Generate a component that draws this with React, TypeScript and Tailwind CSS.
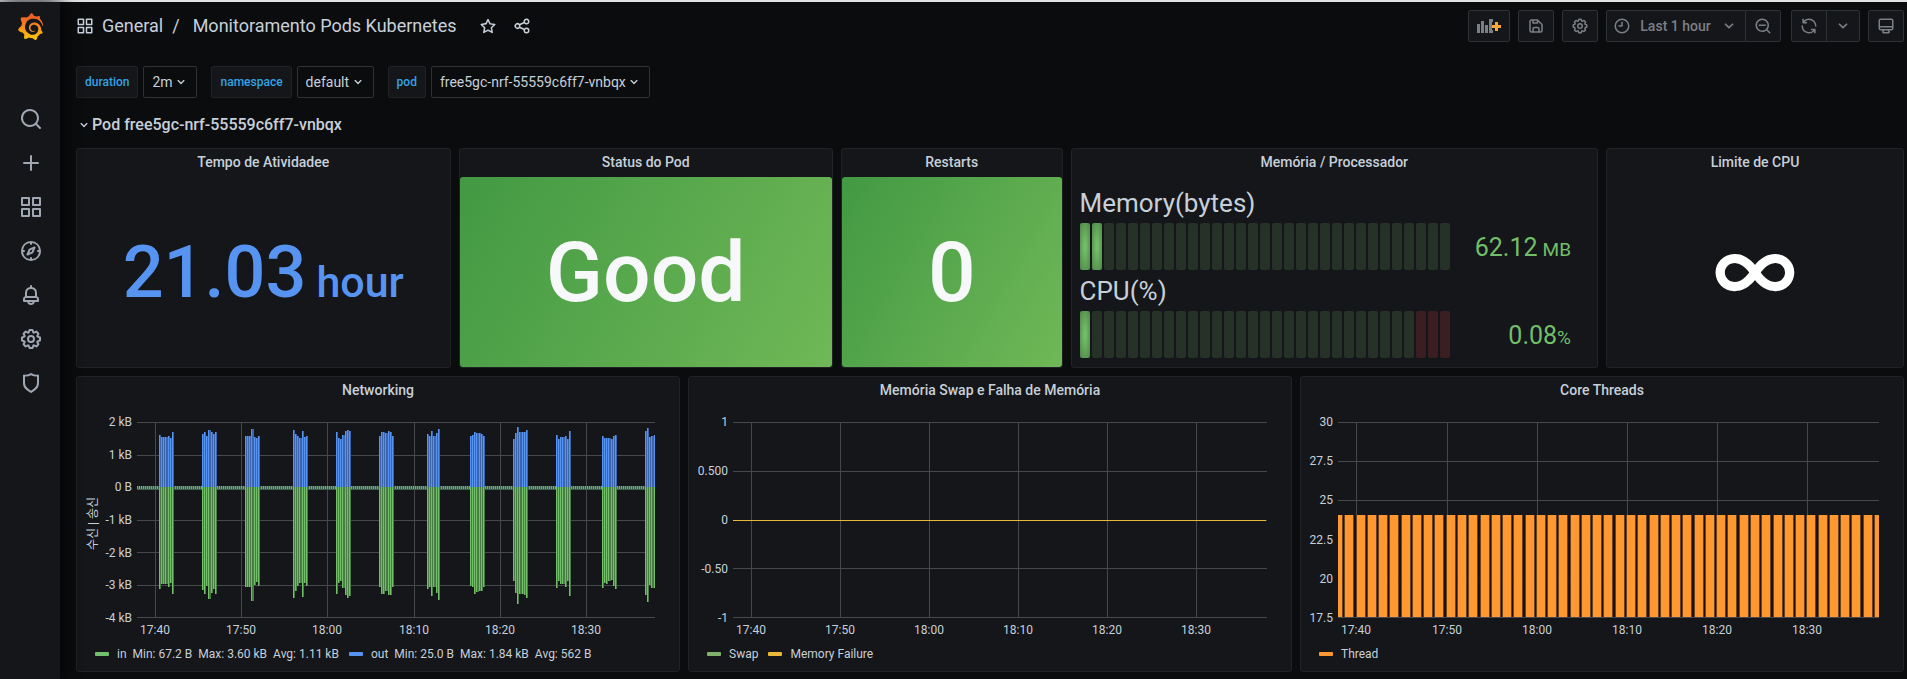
import type { ReactNode } from "react";
import { SiGrafana } from "react-icons/si";

const ICONS = {
  search:
    "M21.71,20.29,18,16.61A9,9,0,1,0,16.61,18l3.68,3.68a1,1,0,0,0,1.42,0A1,1,0,0,0,21.71,20.29ZM11,18a7,7,0,1,1,7-7A7,7,0,0,1,11,18Z",
  plus: "M19,11H13V5a1,1,0,0,0-2,0v6H5a1,1,0,0,0,0,2h6v6a1,1,0,0,0,2,0V13h6a1,1,0,0,0,0-2Z",
  apps: "M10,13H3a1,1,0,0,0-1,1v7a1,1,0,0,0,1,1h7a1,1,0,0,0,1-1V14A1,1,0,0,0,10,13ZM9,20H4V15H9ZM21,2H14a1,1,0,0,0-1,1v7a1,1,0,0,0,1,1h7a1,1,0,0,0,1-1V3A1,1,0,0,0,21,2ZM20,9H15V4h5Zm1,4H14a1,1,0,0,0-1,1v7a1,1,0,0,0,1,1h7a1,1,0,0,0,1-1V14A1,1,0,0,0,21,13Zm-1,7H15V15h5ZM10,2H3A1,1,0,0,0,2,3v7a1,1,0,0,0,1,1h7a1,1,0,0,0,1-1V3A1,1,0,0,0,10,2ZM9,9H4V4H9Z",
  compass:
    "M12,2A10,10,0,1,0,22,12,10,10,0,0,0,12,2Zm1,17.93V19a1,1,0,0,0-2,0v.93A8,8,0,0,1,4.07,13H5a1,1,0,0,0,0-2H4.07A8,8,0,0,1,11,4.07V5a1,1,0,0,0,2,0V4.07A8,8,0,0,1,19.93,11H19a1,1,0,0,0,0,2h.93A8,8,0,0,1,13,19.93ZM15.14,7.55l-5,2.12a1,1,0,0,0-.52.52l-2.12,5a1,1,0,0,0,.21,1.1,1,1,0,0,0,.7.29.93.93,0,0,0,.4-.09l5-2.12a1,1,0,0,0,.52-.52l2.12-5a1,1,0,0,0-1.31-1.31Zm-2.49,5.1-2.28,1,1-2.28,2.28-1Z",
  bell: "M18,13.18V10a6,6,0,0,0-5-5.91V3a1,1,0,0,0-2,0V4.09A6,6,0,0,0,6,10v3.18A3,3,0,0,0,4,16v2a1,1,0,0,0,1,1H8.14a4,4,0,0,0,7.72,0H19a1,1,0,0,0,1-1V16A3,3,0,0,0,18,13.18ZM8,10a4,4,0,0,1,8,0v3H8Zm4,10a2,2,0,0,1-1.72-1h3.44A2,2,0,0,1,12,20Zm6-3H6V16a1,1,0,0,1,1-1H17a1,1,0,0,1,1,1Z",
  cog: "M21.32,9.55l-1.89-.63.89-1.78A1,1,0,0,0,20.13,6L18,3.87a1,1,0,0,0-1.15-.19l-1.78.89-.63-1.89A1,1,0,0,0,13.5,2h-3a1,1,0,0,0-.95.68L8.92,4.57,7.14,3.68A1,1,0,0,0,6,3.87L3.87,6a1,1,0,0,0-.19,1.15l.89,1.78-1.89.63A1,1,0,0,0,2,10.5v3a1,1,0,0,0,.68.95l1.89.63-.89,1.78A1,1,0,0,0,3.87,18L6,20.13a1,1,0,0,0,1.15.19l1.78-.89.63,1.89a1,1,0,0,0,.95.68h3a1,1,0,0,0,.95-.68l.63-1.89,1.78.89A1,1,0,0,0,18,20.13L20.13,18a1,1,0,0,0,.19-1.15l-.89-1.78,1.89-.63A1,1,0,0,0,22,13.5v-3A1,1,0,0,0,21.32,9.55ZM20,12.78l-1.2.4A2,2,0,0,0,17.64,16l.57,1.14-1.1,1.1L16,17.64a2,2,0,0,0-2.79,1.16l-.4,1.2H11.22l-.4-1.2A2,2,0,0,0,8,17.64l-1.14.57-1.1-1.1L6.36,16A2,2,0,0,0,5.2,13.18L4,12.78V11.22l1.2-.4A2,2,0,0,0,6.36,8L5.79,6.89l1.1-1.1L8,6.36A2,2,0,0,0,10.82,5.2l.4-1.2h1.56l.4,1.2A2,2,0,0,0,16,6.36l1.14-.57,1.1,1.1L17.64,8a2,2,0,0,0,1.16,2.79l1.2.4ZM12,8a4,4,0,1,0,4,4A4,4,0,0,0,12,8Zm0,6a2,2,0,1,1,2-2A2,2,0,0,1,12,14Z",
  shield:
    "M19.63,3.65a1,1,0,0,0-.84-.2,8,8,0,0,1-6.22-1.27,1,1,0,0,0-1.14,0A8,8,0,0,1,5.21,3.45a1,1,0,0,0-.84.2A1,1,0,0,0,4,4.43v7.45a9,9,0,0,0,3.77,7.33l3.65,2.6a1,1,0,0,0,1.16,0l3.65-2.6A9,9,0,0,0,20,11.88V4.43A1,1,0,0,0,19.63,3.65ZM18,11.88a7,7,0,0,1-2.93,5.7L12,19.77,8.93,17.58A7,7,0,0,1,6,11.88V5.58a10,10,0,0,0,6-1.39,10,10,0,0,0,6,1.39Z",
  star: "M22,9.67A1,1,0,0,0,21.14,9l-5.69-.83L12.9,3a1,1,0,0,0-1.8,0L8.55,8.16,2.86,9a1,1,0,0,0-.81.68,1,1,0,0,0,.25,1l4.13,4-1,5.68A1,1,0,0,0,6.9,21.44L12,18.77l5.1,2.67a.93.93,0,0,0,.46.12,1,1,0,0,0,.59-.19,1,1,0,0,0,.4-1l-1-5.68,4.13-4A1,1,0,0,0,22,9.67Zm-6.15,4a1,1,0,0,0-.29.88l.72,4.2-3.76-2a1.06,1.06,0,0,0-.94,0l-3.76,2,.72-4.2a1,1,0,0,0-.29-.88l-3-3,4.21-.61a1,1,0,0,0,.76-.55L12,5.7l1.88,3.82a1,1,0,0,0,.76.55l4.21.61Z",
  share:
    "M18,14a4,4,0,0,0-3.08,1.48l-5.1-2.35a3.64,3.64,0,0,0,0-2.26l5.1-2.35A4,4,0,1,0,14,6a4.17,4.17,0,0,0,.07.71L8.79,9.14a4,4,0,1,0,0,5.72l5.28,2.43A4.17,4.17,0,0,0,14,18a4,4,0,1,0,4-4ZM18,4a2,2,0,1,1-2,2A2,2,0,0,1,18,4ZM6,14a2,2,0,1,1,2-2A2,2,0,0,1,6,14Zm12,6a2,2,0,1,1,2-2A2,2,0,0,1,18,20Z",
  save: "M20.71,9.29l-6-6a1,1,0,0,0-.32-.21A1.09,1.09,0,0,0,14,3H6A3,3,0,0,0,3,6V18a3,3,0,0,0,3,3H18a3,3,0,0,0,3-3V10A1,1,0,0,0,20.71,9.29ZM9,5h4V7H9Zm6,14H9V16a1,1,0,0,1,1-1h4a1,1,0,0,1,1,1Zm4-1a1,1,0,0,1-1,1H17V16a3,3,0,0,0-3-3H10a3,3,0,0,0-3,3v3H6a1,1,0,0,1-1-1V6A1,1,0,0,1,6,5H7V8A1,1,0,0,0,8,9h6a1,1,0,0,0,1-1V6.41l4,4Z",
  clock:
    "M12,2A10,10,0,1,0,22,12,10,10,0,0,0,12,2Zm0,18a8,8,0,1,1,8-8A8,8,0,0,1,12,20ZM12,6a1,1,0,0,0-1,1v4H8a1,1,0,0,0,0,2h4a1,1,0,0,0,1-1V7A1,1,0,0,0,12,6Z",
  down: "M17,9.17a1,1,0,0,0-1.41,0L12,12.71,8.46,9.17a1,1,0,0,0-1.41,0,1,1,0,0,0,0,1.42l4.24,4.24a1,1,0,0,0,1.42,0L17,10.59A1,1,0,0,0,17,9.17Z",
  zoomOut:
    "M21.71,20.29,18,16.61A9,9,0,1,0,16.61,18l3.68,3.68a1,1,0,0,0,1.42,0A1,1,0,0,0,21.71,20.29ZM11,18a7,7,0,1,1,7-7A7,7,0,0,1,11,18Zm4-8H7a1,1,0,0,0,0,2h8a1,1,0,0,0,0-2Z",
  sync: "M19.91,15.51H15.38a1,1,0,0,0,0,2h2.4A8,8,0,0,1,4,12a1,1,0,1,0-2,0,10,10,0,0,0,16.88,7.23V21a1,1,0,0,0,2,0V16.5A1,1,0,0,0,19.91,15.51ZM12,2A10,10,0,0,0,5.12,4.77V3a1,1,0,0,0-2,0V7.5a1,1,0,0,0,1,1h4.5a1,1,0,0,0,0-2H6.22A8,8,0,0,1,20,12a1,1,0,0,0,2,0A10,10,0,0,0,12,2Z",
  monitor:
    "M19,2H5A3,3,0,0,0,2,5V15a3,3,0,0,0,3,3H7.64l-.58,1a2,2,0,0,0,0,2,2,2,0,0,0,1.75,1h6.46A2,2,0,0,0,17,21a2,2,0,0,0,0-2l-.59-1H19a3,3,0,0,0,3-3V5A3,3,0,0,0,19,2ZM8.77,20,10,18H14l1.2,2ZM20,15a1,1,0,0,1-1,1H5a1,1,0,0,1-1-1V14H20Zm0-3H4V5A1,1,0,0,1,5,4H19a1,1,0,0,1,1,1Z",
};

type IconName = keyof typeof ICONS;

function Icon({ name, className = "size-[18px]" }: { name: IconName; className?: string }) {
  return (
    <svg viewBox="0 0 24 24" fill="currentColor" aria-hidden="true" className={`${className} shrink-0`}>
      <path d={ICONS[name]} />
    </svg>
  );
}

function AddPanelIcon() {
  return (
    <svg viewBox="0 0 24 16" aria-hidden="true" className="h-4 w-6 shrink-0">
      <g fill="#7b8087">
        <rect x="0" y="6" width="3" height="9" />
        <rect x="4" y="3" width="3" height="12" />
        <rect x="8" y="7" width="3" height="8" />
        <path d="M12 1h4v3h-1v8h1v3h-4z" />
      </g>
      <path d="M18 4h3v3h3v3h-3v3h-3v-3h-3V7h3z" fill="#fba43b" />
    </svg>
  );
}

const NAV: { icon: IconName; label: string }[] = [
  { icon: "search", label: "Search" },
  { icon: "plus", label: "Create" },
  { icon: "apps", label: "Dashboards" },
  { icon: "compass", label: "Explore" },
  { icon: "bell", label: "Alerting" },
  { icon: "cog", label: "Configuration" },
  { icon: "shield", label: "Server Admin" },
];

function Sidebar() {
  return (
    <nav className="z-10 flex w-[60px] shrink-0 flex-col items-center bg-[#141619] pl-px shadow-[0_0_20px_#000]">
      <svg className="h-0 w-0" aria-hidden="true">
        <linearGradient id="logo-fill" x1="0" y1="0" x2="0" y2="1">
          <stop offset="0.1" stopColor="#f05a28" />
          <stop offset="1" stopColor="#fbca0a" />
        </linearGradient>
      </svg>
      <a href="#home" aria-label="Home" className="mt-[11px] mb-[67px]">
        <SiGrafana size={27} fill="url(#logo-fill)" />
      </a>
      <div className="flex flex-col gap-5">
        {NAV.map((item) => (
          <a key={item.icon} href={`#${item.icon}`} aria-label={item.label} className="text-[#9fa7b3]">
            <Icon name={item.icon} className="size-6" />
          </a>
        ))}
      </div>
    </nav>
  );
}

function ToolButton({ label, className, children }: { label?: string; className: string; children: ReactNode }) {
  return (
    <button
      type="button"
      aria-label={label}
      className={`${className} flex h-8 items-center justify-center border border-[#2c3235] bg-[#141619] text-sm font-medium text-[#7b8087]`}
    >
      {children}
    </button>
  );
}

function TopBar() {
  return (
    <header className="flex items-center justify-between pr-[3px] pl-4">
      <div className="flex items-center text-[#c7d0d9]">
        <Icon name="apps" />
        <h1 className="ml-2 flex text-lg leading-6">
          <a href="#general">General</a>
          <span className="mr-[13px] ml-[9px]">/</span>
          <a href="#dashboard">Monitoramento Pods Kubernetes</a>
        </h1>
        <button type="button" aria-label="Mark as favorite" className="ml-[22px]">
          <Icon name="star" />
        </button>
        <button type="button" aria-label="Share dashboard" className="ml-4">
          <Icon name="share" />
        </button>
      </div>
      <div className="flex gap-2">
        <ToolButton label="Add panel" className="w-[42px] rounded-xs">
          <AddPanelIcon />
        </ToolButton>
        <ToolButton label="Save dashboard" className="w-9 rounded-xs">
          <Icon name="save" />
        </ToolButton>
        <ToolButton label="Dashboard settings" className="w-9 rounded-xs">
          <Icon name="cog" />
        </ToolButton>
        <div className="mr-0.5 flex">
          <ToolButton className="w-[140px] rounded-l-xs">
            <Icon name="clock" />
            <span className="mr-2 ml-[9px]">Last 1 hour</span>
            <Icon name="down" className="size-5" />
          </ToolButton>
          <ToolButton label="Zoom out time range" className="-ml-px w-9 rounded-r-xs">
            <Icon name="zoomOut" />
          </ToolButton>
        </div>
        <div className="flex">
          <ToolButton label="Refresh dashboard" className="w-9 rounded-l-xs">
            <Icon name="sync" />
          </ToolButton>
          <ToolButton label="Refresh interval" className="-ml-px w-[34px] rounded-r-xs">
            <Icon name="down" className="size-5" />
          </ToolButton>
        </div>
        <ToolButton label="Cycle view mode" className="w-9 rounded-xs">
          <Icon name="monitor" />
        </ToolButton>
      </div>
    </header>
  );
}

const VARIABLES = [
  { name: "duration", value: "2m" },
  { name: "namespace", value: "default" },
  { name: "pod", value: "free5gc-nrf-55559c6ff7-vnbqx" },
];

function Variables() {
  return (
    <div className="flex gap-[14px]">
      {VARIABLES.map((v) => (
        <div key={v.name} className="flex gap-[5px]">
          <label
            htmlFor={`var-${v.name}`}
            className="flex h-8 items-center rounded-xs border border-[#202226] bg-[#141619] px-2 text-xs font-medium text-[#33a2e5]"
          >
            {v.name}
          </label>
          <div className="relative flex">
            <select
              id={`var-${v.name}`}
              className="h-8 appearance-none rounded-xs border border-[#2c3235] bg-[#0b0c0e] pr-[23px] pl-2 text-sm text-[#c7d0d9]"
            >
              <option>{v.value}</option>
            </select>
            <span className="pointer-events-none absolute inset-y-0 right-2 flex items-center text-[#c7d0d9]">
              <Icon name="down" className="size-4" />
            </span>
          </div>
        </div>
      ))}
    </div>
  );
}

function Panel({ title, className, children }: { title: string; className: string; children: ReactNode }) {
  return (
    <section className={`${className} flex min-w-0 flex-col rounded-[3px] border border-[#202226] bg-[#141619]`}>
      <h2 className="h-7 text-center text-sm leading-[26px] font-medium text-[#c7d0d9]">{title}</h2>
      {children}
    </section>
  );
}

const COLORED = "bg-[linear-gradient(120deg,#429943,#70b857)] pt-0.5 text-[#f7f8fa] text-[84px]";

function Stat({ className, children }: { className: string; children: ReactNode }) {
  return (
    <div className={`${className} flex flex-1 items-center justify-center rounded-[3px] font-medium`}>
      <div className="flex items-baseline leading-none">{children}</div>
    </div>
  );
}

const CELLS = 31;

function Gauge(props: { title: string; value: string; unit: ReactNode; lit: number; critical: number }) {
  return (
    <div>
      <h3 className="h-[38px] text-[26px] leading-9 text-[#c7d0d9]">{props.title}</h3>
      <div className="flex h-[47px] items-center">
        <div className="flex h-full w-[370px] gap-0.5">
          {Array.from({ length: CELLS }, (_, i) => {
            const fill =
              i < props.lit
                ? "bg-[radial-gradient(#73bf69_10%,#4f8549)]"
                : i >= CELLS - props.critical
                  ? "bg-[#3b1e22]"
                  : "bg-[#263127]";
            return <span key={i} className={`${fill} flex-1 rounded-xs`} />;
          })}
        </div>
        <div className="flex flex-1 items-baseline justify-end pt-0.5 pr-[18px] text-[25px] text-[#73bf69]">
          {props.value}
          {props.unit}
        </div>
      </div>
    </div>
  );
}

interface ChartProps {
  width: number;
  yLabels: string[];
  axisWidth: string;
  axisTitle?: string;
  xTicks: number[];
  overlay: ReactNode;
  legend: ReactNode;
}

const TIMES = ["17:40", "17:50", "18:00", "18:10", "18:20", "18:30"];
const PLOT_HEIGHT = 196;

function Chart({ width, yLabels, axisWidth, axisTitle, xTicks, overlay, legend }: ChartProps) {
  const step = (PLOT_HEIGHT - 1) / (yLabels.length - 1);
  return (
    <div className="flex flex-1 flex-col pt-[17px] pb-[9px] text-xs leading-4 text-[#c7d0d9]">
      <div className="flex h-[196px] pr-6">
        <div className={`${axisWidth} flex shrink-0 justify-end`}>
          {axisTitle && (
            <span className="mr-auto ml-2 rotate-180 self-center pb-2 whitespace-nowrap [text-orientation:sideways] [writing-mode:vertical-rl]">
              {axisTitle}
            </span>
          )}
          <div className="flex flex-col justify-between pr-[5px] text-right">
            {yLabels.map((label) => (
              <span key={label} className="flex h-0 items-center justify-end whitespace-nowrap">
                {label}
              </span>
            ))}
          </div>
        </div>
        <div className="relative min-w-0 flex-1">
          <svg
            viewBox={`0 0 ${width} ${PLOT_HEIGHT}`}
            preserveAspectRatio="none"
            shapeRendering="crispEdges"
            className="h-full w-full"
          >
            <g fill="#46484b">
              {yLabels.map((label, i) => (
                <rect key={label} x="0" y={Math.round(i * step)} width={width} height="1" />
              ))}
              {xTicks.map((x) => (
                <rect key={x} x={x} y="0" width="1" height={PLOT_HEIGHT} />
              ))}
            </g>
            {overlay}
          </svg>
          {xTicks.map((x, i) => (
            <span
              key={x}
              className="absolute top-full mt-1 -translate-x-1/2"
              style={{ left: `${(x / width) * 100}%` }}
            >
              {TIMES[i]}
            </span>
          ))}
        </div>
      </div>
      <div className="mt-7 flex gap-2.5 pl-[18px]">{legend}</div>
    </div>
  );
}

function LegendItem({ color, children }: { color: string; children: ReactNode }) {
  return (
    <div className="flex items-center gap-2">
      <span className={`${color} h-1 w-3.5 rounded-[1px]`} />
      <span className="flex gap-1.5">{children}</span>
    </div>
  );
}

// Traffic bursts: x of the first bar, bar heights above zero (out) and below zero (in), in plot pixels.
const BURSTS: { x: number; out: number[]; in: number[] }[] = [
  { x: 22, out: [52, 50, 50, 50, 51, 49, 55], in: [102, 97, 97, 97, 100, 96, 107] },
  { x: 65, out: [53, 55, 51, 57, 55, 53, 55], in: [103, 107, 99, 112, 106, 102, 107] },
  { x: 108, out: [51, 51, 51, 58, 50, 49, 51], in: [100, 100, 100, 114, 98, 95, 99] },
  { x: 156, out: [57, 53, 51, 49, 56, 50, 51], in: [111, 104, 99, 96, 110, 96, 99] },
  { x: 199, out: [55, 49, 48, 52, 56, 57, 56], in: [107, 96, 94, 101, 108, 111, 109] },
  { x: 242, out: [51, 55, 55, 54, 56, 55, 51], in: [100, 107, 107, 104, 108, 108, 100] },
  { x: 290, out: [53, 51, 56, 51, 54, 58], in: [102, 100, 109, 100, 106, 113] },
  { x: 333, out: [51, 52, 55, 54, 54, 53, 51], in: [99, 100, 107, 105, 104, 104, 100] },
  { x: 376, out: [48, 54, 60, 55, 55, 55, 57], in: [94, 106, 117, 107, 107, 108, 111] },
  { x: 419, out: [52, 48, 50, 50, 51, 48, 56], in: [101, 94, 97, 97, 100, 94, 109] },
  { x: 465, out: [51, 49, 49, 49, 48, 51, 52], in: [101, 96, 97, 94, 93, 99, 102] },
  { x: 508, out: [56, 59, 50, 51, 52], in: [108, 115, 98, 101, 101] },
];

function NetworkSeries() {
  const zero = 65;
  return (
    <g>
      <rect x="0" y={zero - 1} width="518" height="4" fill="#3c5f4c" />
      {Array.from({ length: 259 }, (_, i) => (
        <rect key={i} x={i * 2} y={zero - 1} width="1" height="3" fill="#74a793" />
      ))}
      {BURSTS.map((b) => (
        <g key={b.x}>
          {b.out.map((h, i) => {
            const x = b.x + Math.round(i * 2.15);
            const w = Math.round((i + 1) * 2.15) - Math.round(i * 2.15);
            return (
              <g key={i}>
                <rect x={x} y={zero - h} width={w} height={h} fill="#3b66ad" />
                <rect x={x} y={zero - h} width="1" height={h} fill="#5794f2" />
                <rect x={x} y={zero} width={w} height={b.in[i]} fill="#487d43" />
                <rect x={x} y={zero} width="1" height={b.in[i]} fill="#73bf69" />
              </g>
            );
          })}
        </g>
      ))}
    </g>
  );
}

function ThreadSeries() {
  const top = 93;
  const height = 102;
  return (
    <g>
      <rect x="0" y={top} width="541" height={height} fill="#1c120a" fillOpacity="0.85" />
      {Array.from({ length: 49 }, (_, i) => {
        const x = Math.round(i * 11.27 - 4);
        return (
          <g key={i}>
            <rect x={x - 1} y={top} width="10" height={height} fill="#6b431d" />
            <rect x={x} y={top} width="8" height={height} fill="#ff9830" />
          </g>
        );
      })}
    </g>
  );
}

export default function App() {
  return (
    <div className="flex min-h-screen border-t-2 border-[#dfe3e6] bg-[#0b0c0e] font-[Roboto,'Noto_Sans_CJK_KR',sans-serif] text-[#c7d0d9]">
      <Sidebar />
      <main className="min-w-0 flex-1 pt-2 pb-[7px]">
        <TopBar />
        <div className="mt-6 pr-[3px] pl-4">
          <Variables />
          <button type="button" className="mt-[17px] flex h-5 items-center text-base font-medium">
            <Icon name="down" className="size-4" />
            <span>Pod free5gc-nrf-55559c6ff7-vnbqx</span>
          </button>
          <div className="mt-[13px] grid grid-cols-24 gap-2">
            <Panel title="Tempo de Atividadee" className="col-span-5 min-h-[220px]">
              <Stat className="pt-0.5 text-[72px] text-[#5794f2]">
                21.03<span className="ml-2.5 text-[43px]">hour</span>
              </Stat>
            </Panel>
            <Panel title="Status do Pod" className="col-span-5">
              <Stat className={COLORED}>Good</Stat>
            </Panel>
            <Panel title="Restarts" className="col-span-3">
              <Stat className={COLORED}>0</Stat>
            </Panel>
            <Panel title="Memória / Processador" className="col-span-7">
              <div className="flex flex-col gap-[3px] px-2 pt-2">
                <Gauge
                  title="Memory(bytes)"
                  value="62.12"
                  unit={<span className="ml-[5px] text-[19px]">MB</span>}
                  lit={2}
                  critical={0}
                />
                <Gauge
                  title="CPU(%)"
                  value="0.08"
                  unit={<span className="text-[19px]">%</span>}
                  lit={1}
                  critical={3}
                />
              </div>
            </Panel>
            <Panel title="Limite de CPU" className="col-span-4">
              <Stat className="pb-2 font-[Inter,Roboto,sans-serif] text-[92px] text-white">∞</Stat>
            </Panel>

            <Panel title="Networking" className="col-span-8">
              <Chart
                width={518}
                axisWidth="w-[60px]"
                axisTitle="수신 | 송신"
                yLabels={["2 kB", "1 kB", "0 B", "-1 kB", "-2 kB", "-3 kB", "-4 kB"]}
                xTicks={[18, 104, 190, 277, 363, 449]}
                overlay={<NetworkSeries />}
                legend={
                  <>
                    <LegendItem color="bg-[#73bf69]">
                      <span>in</span>
                      <span>Min: 67.2 B</span>
                      <span>Max: 3.60 kB</span>
                      <span>Avg: 1.11 kB</span>
                    </LegendItem>
                    <LegendItem color="bg-[#5794f2]">
                      <span>out</span>
                      <span>Min: 25.0 B</span>
                      <span>Max: 1.84 kB</span>
                      <span>Avg: 562 B</span>
                    </LegendItem>
                  </>
                }
              />
            </Panel>
            <Panel title="Memória Swap e Falha de Memória" className="col-span-8">
              <Chart
                width={534}
                axisWidth="w-11"
                yLabels={["1", "0.500", "0", "-0.50", "-1"]}
                xTicks={[18, 107, 196, 285, 374, 463]}
                overlay={<rect x="0" y="98" width="533" height="1" fill="#eab839" />}
                legend={
                  <>
                    <LegendItem color="bg-[#7eb26d]">Swap</LegendItem>
                    <LegendItem color="bg-[#eab839]">Memory Failure</LegendItem>
                  </>
                }
              />
            </Panel>
            <Panel title="Core Threads" className="col-span-8">
              <Chart
                width={541}
                axisWidth="w-[37px]"
                yLabels={["30", "27.5", "25", "22.5", "20", "17.5"]}
                xTicks={[18, 109, 199, 289, 379, 469]}
                overlay={<ThreadSeries />}
                legend={<LegendItem color="bg-[#ff9830]">Thread</LegendItem>}
              />
            </Panel>
          </div>
        </div>
      </main>
    </div>
  );
}
